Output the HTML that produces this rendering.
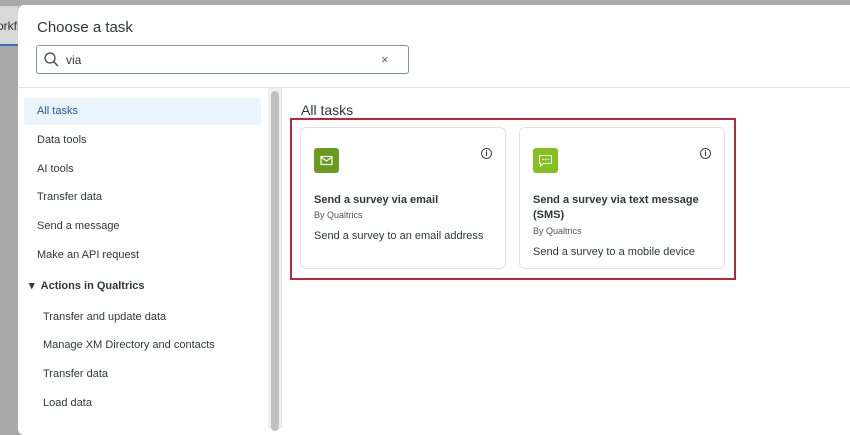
<!DOCTYPE html>
<html><head><style>
*{margin:0;padding:0;box-sizing:border-box}
body{width:850px;height:423px;overflow:hidden;background:#a9a9a9;font-family:"Liberation Sans",sans-serif;position:relative;color:#32363a}
.bgtab{position:absolute;left:0;top:6px;width:18px;height:40px;background:#d8d8d8;font-size:12px;color:#333;line-height:40px;overflow:hidden;white-space:nowrap;text-indent:-3px}
.bgtab:after{content:"";position:absolute;left:0;bottom:0;width:18px;height:2px;background:#3b73b9}
.modal{position:absolute;left:18px;top:5px;width:840px;height:430px;background:#fff;border-radius:6px}
h1{position:absolute;left:19px;top:14px;font-size:15px;font-weight:normal;color:#32363a}
.search{position:absolute;left:18px;top:40px;width:373px;height:29px;border:1px solid #89919a;border-radius:3px;font-size:12px;color:#32363a}
.search span{position:absolute;left:29px;top:7px}
.search .x{left:344px;top:6px;color:#666;font-size:13px}
.hr{position:absolute;left:0;top:82px;width:840px;height:1px;background:#e5e5e5}
.side{position:absolute;left:0;top:83px;width:250px}
.item{position:absolute;left:19px;font-size:11px;color:#32363a}
.sel{position:absolute;left:6px;top:93px;width:237px;height:27px;background:#ebf3fb;border-radius:3px}
.track{position:absolute;left:250px;top:83px;width:14px;height:340px;background:#f0f0f0;border-right:1px solid #e0e0e0}
.thumb{position:absolute;left:253px;top:86px;width:8px;height:340px;background:#c1c1c1;border-radius:4px}
h2{position:absolute;left:283px;top:97px;font-size:14px;font-weight:normal}
.red{position:absolute;left:272px;top:113px;width:446px;height:162px;border:2px solid #b5283d}
.card{position:absolute;top:122px;width:206px;height:142px;border:1px solid #e1e1e1;border-radius:6px}
.ic{position:absolute;left:13px;top:20px;width:25px;height:25px;border-radius:3px}
.info{position:absolute;right:13px;top:20px;width:11px;height:11px;border:1px solid #444;border-radius:50%;font-size:8px;text-align:center;line-height:9px;font-weight:bold}
.t{position:absolute;left:13px;top:65px;font-size:11px;font-weight:bold;line-height:15px;width:185px}
.by{position:absolute;left:13px;font-size:9px;color:#555}
.d{position:absolute;left:13px;font-size:11px}
</style></head><body>
<div class="bgtab">orkflow</div>
<div class="modal">
<h1>Choose a task</h1>
<div class="search">
<svg style="position:absolute;left:7px;top:6px" width="15" height="15" viewBox="0 0 15 15"><circle cx="6" cy="6" r="5" fill="none" stroke="#444" stroke-width="1.3"/><path d="M9.7 9.7L14 14" stroke="#444" stroke-width="1.4"/></svg>
<span>via</span><span class="x">×</span></div>
<div class="hr"></div>
<div class="sel"></div>
<div class="item" style="top:100px;color:#1a5aa0">All tasks</div>
<div class="item" style="top:129px">Data tools</div>
<div class="item" style="top:158px">AI tools</div>
<div class="item" style="top:186px">Transfer data</div>
<div class="item" style="top:215px">Send a message</div>
<div class="item" style="top:244px">Make an API request</div>
<div class="item" style="top:274px;left:11px;font-weight:bold">▾ &nbsp;Actions in Qualtrics</div>
<div class="item" style="top:306px;left:25px">Transfer and update data</div>
<div class="item" style="top:334px;left:25px">Manage XM Directory and contacts</div>
<div class="item" style="top:363px;left:25px">Transfer data</div>
<div class="item" style="top:392px;left:25px">Load data</div>
<div class="track"></div><div class="thumb"></div>
<h2>All tasks</h2>
<div class="red"></div>
<div class="card" style="left:282px">
<div class="ic" style="background:#6a9a1f"><svg width="25" height="25"><rect x="7" y="8.5" width="11" height="8" fill="none" stroke="#fff" stroke-width="1.2"/><path d="M7 9l5.5 4L18 9" fill="none" stroke="#fff" stroke-width="1.2"/></svg></div>
<div class="info">i</div>
<div class="t">Send a survey via email</div>
<div class="by" style="top:82px">By Qualtrics</div>
<div class="d" style="top:102px">Send a survey to an email address</div>
</div>
<div class="card" style="left:501px">
<div class="ic" style="background:#83c21e"><svg width="25" height="25"><path d="M6.5 7.5h12v8h-8l-3 2.5v-2.5h-1z" fill="none" stroke="#fff" stroke-width="1.1"/><circle cx="10" cy="11.5" r=".7" fill="#fff"/><circle cx="12.5" cy="11.5" r=".7" fill="#fff"/><circle cx="15" cy="11.5" r=".7" fill="#fff"/></svg></div>
<div class="info">i</div>
<div class="t">Send a survey via text message (SMS)</div>
<div class="by" style="top:98px">By Qualtrics</div>
<div class="d" style="top:118px">Send a survey to a mobile device</div>
</div>
</div>
</body></html>
